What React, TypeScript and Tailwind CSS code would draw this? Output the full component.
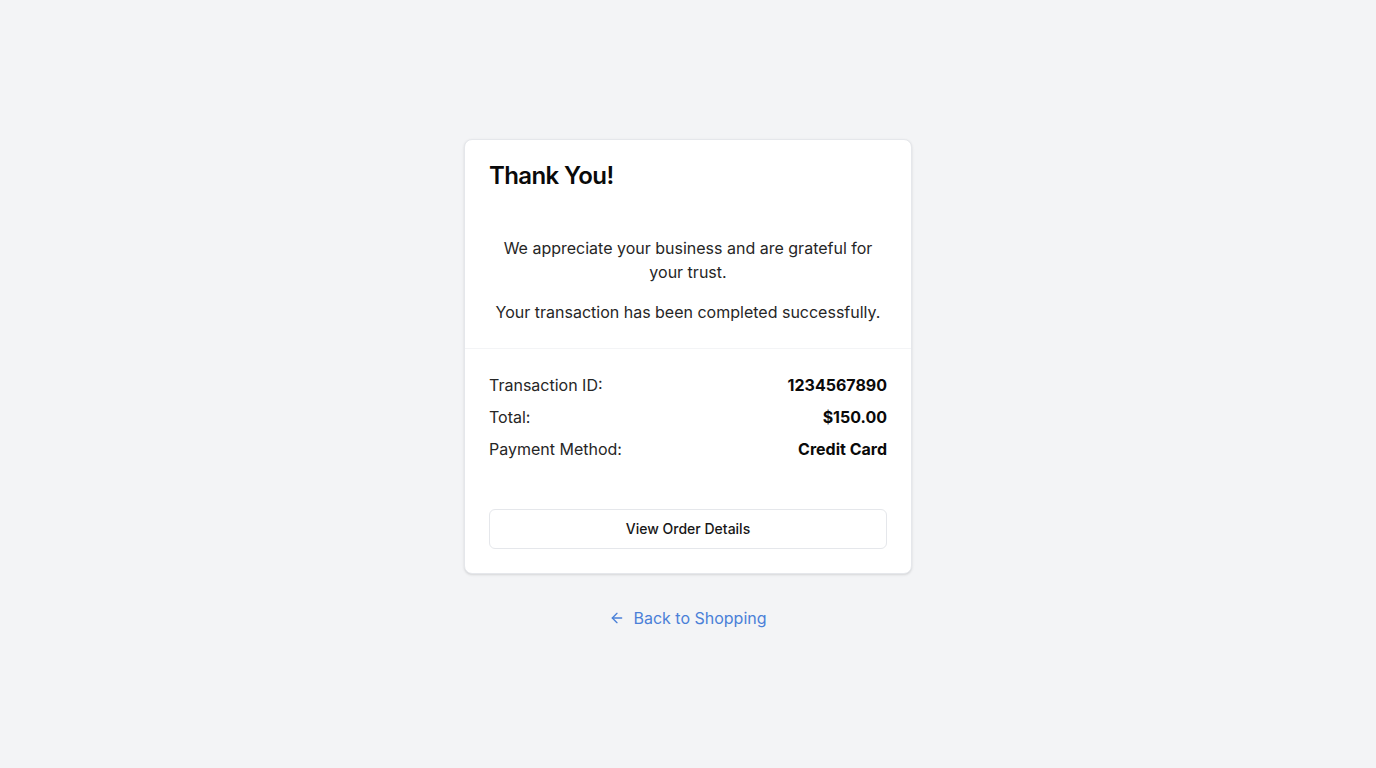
import { ArrowLeft } from "lucide-react";

const details = [
  { label: "Transaction ID:", value: "1234567890" },
  { label: "Total:", value: "$150.00" },
  { label: "Payment Method:", value: "Credit Card" },
];

export default function App() {
  return (
    <div
      className="min-h-screen bg-gray-100 flex flex-col items-center justify-center"
      style={{ fontFamily: "Inter, 'Noto Sans', sans-serif" }}
    >
      <div className="w-[448px] bg-white border border-gray-200 rounded-lg shadow-sm">
        <div className="p-6">
          <h1 className="text-2xl leading-none font-semibold tracking-tight text-neutral-950">Thank You!</h1>
        </div>
        <div className="px-6 pb-6 pt-6 border-b border-gray-100 text-center text-base text-neutral-800 space-y-4">
          <p>We appreciate your business and are grateful for your trust.</p>
          <p>Your transaction has been completed successfully.</p>
        </div>
        <div className="px-6 pt-6 space-y-2 text-base text-neutral-800">
          {details.map((d) => (
            <div key={d.label} className="flex items-center justify-between">
              <span>{d.label}</span>
              <span className="font-bold text-neutral-950">{d.value}</span>
            </div>
          ))}
        </div>
        <div className="p-6 pt-12">
          <button className="w-full h-10 rounded-md border border-gray-200 bg-white text-sm font-medium text-neutral-900">
            View Order Details
          </button>
        </div>
      </div>
      <a href="#" className="mt-8 flex items-center gap-2 text-base text-[#4a80d8]">
        <ArrowLeft className="w-4 h-4" />
        Back to Shopping
      </a>
    </div>
  );
}
